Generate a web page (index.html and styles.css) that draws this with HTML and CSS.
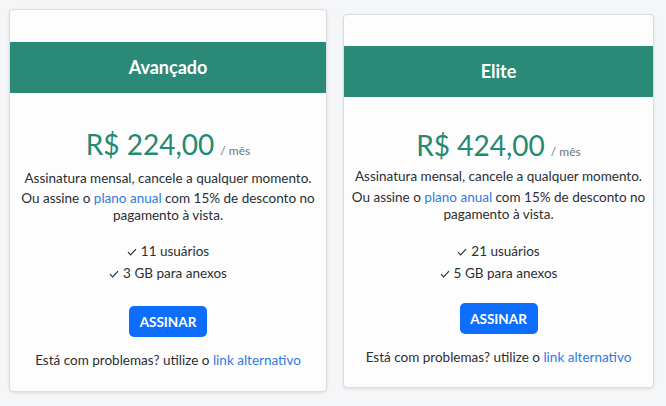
FILE: index.html
```html
<!doctype html>
<html>
<head>
<meta charset="UTF-8">
<title>Planos</title>
<link rel="stylesheet" href="styles.css">
</head>
<body>
<div class="plans">

  <div class="card">
    <div class="card-head">Avançado</div>
    <div class="card-body">
      <div class="price">R$ 224,00<span class="per">/ mês</span></div>
      <p class="note">Assinatura mensal, cancele a qualquer momento.</p>
      <p class="note annual">Ou assine o <a href="#">plano anual</a> com 15% de desconto no<br>pagamento à vista.</p>
      <ul class="features">
        <li><svg class="check" viewBox="0 0 10 8"><polyline points="1,4.2 3.6,6.8 9,1.2"/></svg>11 usuários</li>
        <li><svg class="check" viewBox="0 0 10 8"><polyline points="1,4.2 3.6,6.8 9,1.2"/></svg>3 GB para anexos</li>
      </ul>
      <button class="btn">ASSINAR</button>
      <p class="alt">Está com problemas? utilize o <a href="#">link alternativo</a></p>
    </div>
  </div>

  <div class="card card-elite">
    <div class="card-head">Elite</div>
    <div class="card-body">
      <div class="price">R$ 424,00<span class="per">/ mês</span></div>
      <p class="note">Assinatura mensal, cancele a qualquer momento.</p>
      <p class="note annual">Ou assine o <a href="#">plano anual</a> com 15% de desconto no<br>pagamento à vista.</p>
      <ul class="features">
        <li><svg class="check" viewBox="0 0 10 8"><polyline points="1,4.2 3.6,6.8 9,1.2"/></svg>21 usuários</li>
        <li><svg class="check" viewBox="0 0 10 8"><polyline points="1,4.2 3.6,6.8 9,1.2"/></svg>5 GB para anexos</li>
      </ul>
      <button class="btn">ASSINAR</button>
      <p class="alt">Está com problemas? utilize o <a href="#">link alternativo</a></p>
    </div>
  </div>

</div>
</body>
</html>
```

FILE: styles.css
```css
body { margin: 0; background: #f5f6f8; font-family: "Lato", "Noto Sans", sans-serif; font-size: 13.5px; line-height: 16px; color: #2b2f33; }
a { color: #2f7be0; text-decoration: none; }

.plans { display: flex; align-items: flex-start; gap: 16px; padding: 9px; }

.card { width: 318px; background: #fdfdfe; border: 1px solid #dadde1; border-radius: 4px; box-shadow: 0 1px 3px rgba(0, 0, 0, 0.1); padding: 32px 0 23px; box-sizing: border-box; }
.card-elite { width: 311px; margin-top: 5px; padding: 31px 0 22px; }

.card-head { background: #2a8a77; color: #fff; height: 51px; line-height: 51px; text-align: center; font-size: 18px; font-weight: bold; }
.card-body { padding: 36px 4px 0; text-align: center; }
.card-elite .card-body { padding-top: 33px; }

.price { color: #238a71; font-size: 28px; line-height: 30px; }
.per { color: #6c757d; font-size: 12px; line-height: 1; margin-left: 6px; }

.note { margin: 11px 0 0; }
.annual { margin-top: 4px; line-height: 17px; white-space: nowrap; }
.card-elite .note { margin-top: 8px; }
.card-elite .annual { margin-top: 5px; }

.features { list-style: none; margin: 16px 0 0; padding: 0; }
.card-elite .features { margin-top: 17px; }
.features li { line-height: 22px; }
.check { width: 10px; height: 8px; margin-right: 4px; fill: none; stroke: #2b2f33; stroke-width: 1.2; }

.btn { display: block; margin: 22px auto 0; background: #0d6efd; color: #fff; border: 0; border-radius: 5px; width: 78px; height: 31px; font-family: inherit; font-size: 13.5px; font-weight: bold; }
.card-elite .btn { margin-top: 19px; }
.alt { margin: 15px 0 0; }
```
